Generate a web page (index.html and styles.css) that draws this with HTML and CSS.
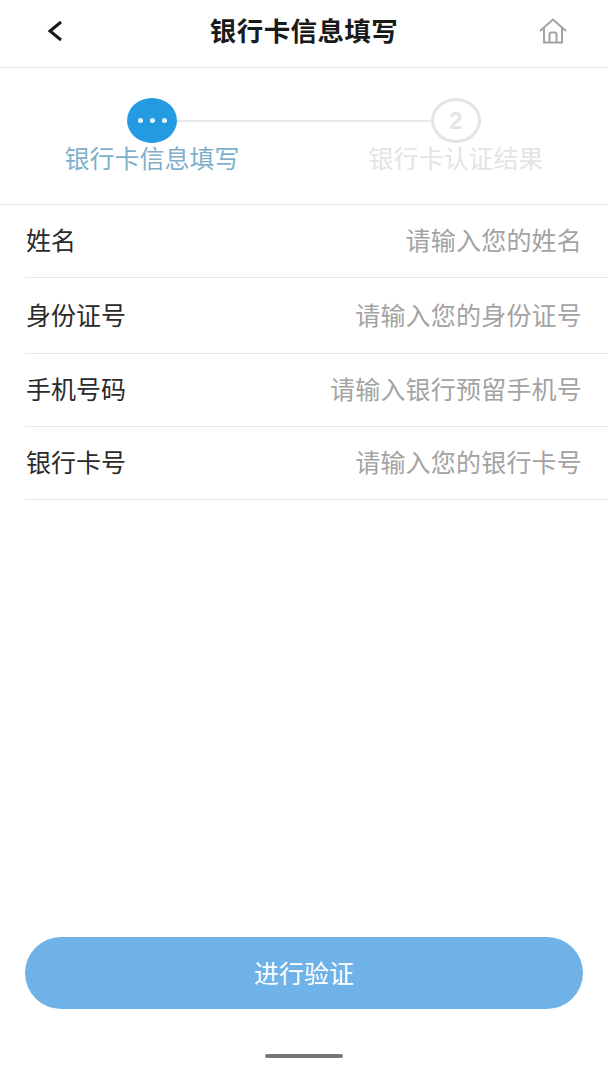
FILE: index.html
```html
<!DOCTYPE html>
<html lang="zh-CN">

<head>
  <meta charset="UTF-8">
  <meta name="viewport" content="width=device-width, initial-scale=1.0">
  <title>银行卡信息填写</title>
  <link rel="stylesheet" href="styles.css">
</head>

<body>
  <div class="page">
    <header class="header">
      <svg class="back" width="16" height="22" viewBox="0 0 16 22">
        <path d="M14 2 L3 11 L14 20" fill="none" stroke="#1a1a1a" stroke-width="3" />
      </svg>
      <h1 class="title">银行卡信息填写</h1>
      <svg class="home" width="28" height="26" viewBox="0 0 28 26">
        <path d="M1 13 L14 1.5 L27 13 M5 10 V24.5 H23 V10 M10.500 24.500 V16.500 Q10.500 14.500 12.500 14.500 H15.500 Q17.500 14.500 17.500 16.500 V24.500" fill="none" stroke="#a3a3a3" stroke-width="2" />
      </svg>
    </header>

    <section class="steps">
      <div class="track">
        <div class="dot-circle">
          <span></span><span></span><span></span>
        </div>
        <div class="connector"></div>
        <div class="num-circle">2</div>
      </div>
      <div class="labels">
        <span class="label active">银行卡信息填写</span>
        <span class="label">银行卡认证结果</span>
      </div>
    </section>

    <form class="form">
      <div class="row">
        <label>姓名</label>
        <span class="hint">请输入您的姓名</span>
      </div>
      <div class="row tall">
        <label>身份证号</label>
        <span class="hint">请输入您的身份证号</span>
      </div>
      <div class="row">
        <label>手机号码</label>
        <span class="hint">请输入银行预留手机号</span>
      </div>
      <div class="row">
        <label>银行卡号</label>
        <span class="hint">请输入您的银行卡号</span>
      </div>
    </form>

    <div class="spacer"></div>

    <button class="submit" type="button">进行验证</button>
    <div class="home-bar"></div>
  </div>
</body>

</html>
```

FILE: styles.css
```css
:root {
  --blue: #249ae3;
  --button-blue: #6fb2e7;
  --line: #e8e8e8;
  --faint: #e4e4e4;
}

* {
  box-sizing: border-box;
}

body {
  margin: 0;
  padding: 0;
  background-color: #fff;
  font-family: "Noto Sans CJK SC", "Noto Sans", sans-serif;
  color: #2a2a2a;
}

.page {
  display: flex;
  flex-direction: column;
  height: 1080px;
  overflow: hidden;
}

.header {
  display: grid;
  grid-template-columns: 1fr auto 1fr;
  align-items: center;
  height: 68px;
  padding: 0 47px 5px;
  border-bottom: 1px solid var(--line);
}

.home {
  justify-self: end;
  margin-right: -6px;
}

.title {
  margin: 0 0 3px;
  font-size: 26.5px;
  font-weight: 700;
  letter-spacing: 0.4px;
  color: #1a1a1a;
}

.steps {
  height: 137px;
  padding-top: 30px;
  border-bottom: 1px solid var(--line);
}

.track {
  display: flex;
  align-items: center;
  margin: 0 127px;
}

.dot-circle,
.num-circle {
  display: flex;
  align-items: center;
  justify-content: center;
  flex: none;
  width: 50px;
  height: 45px;
  border-radius: 50%;
}

.dot-circle {
  gap: 7px;
  background-color: var(--blue);
}

.dot-circle span {
  width: 5px;
  height: 5px;
  border-radius: 50%;
  background-color: #e6f6ff;
}

.num-circle {
  border: 3px solid var(--faint);
  font-family: "Liberation Sans", sans-serif;
  font-size: 24px;
  font-weight: 700;
  color: var(--faint);
}

.connector {
  flex: 1;
  height: 2px;
  background-color: var(--line);
}

.labels {
  display: grid;
  grid-template-columns: 1fr 1fr;
  margin-top: -1px;
  line-height: 30px;
}

.label {
  font-size: 25px;
  text-align: center;
  color: var(--faint);
}

.label.active {
  color: #7fb0cb;
}

.row {
  display: flex;
  align-items: center;
  justify-content: space-between;
  height: 73px;
  margin-left: 25px;
  padding: 0 26px 4px 1px;
  border-bottom: 1px solid var(--line);
  font-size: 25px;
}

.row.tall {
  height: 76px;
}

.hint {
  letter-spacing: 0.2px;
  color: #a3a3a3;
}

.spacer {
  flex: 1;
}

.submit {
  display: block;
  flex: none;
  width: 558px;
  height: 72px;
  margin-left: 25px;
  padding: 0 0 3px;
  border: none;
  border-radius: 36px;
  background-color: var(--button-blue);
  font-family: inherit;
  font-size: 25px;
  color: #fff;
}

.home-bar {
  flex: none;
  width: 78px;
  height: 4px;
  margin: 45px auto 22px;
  border-radius: 2px;
  background-color: #777;
}
```
